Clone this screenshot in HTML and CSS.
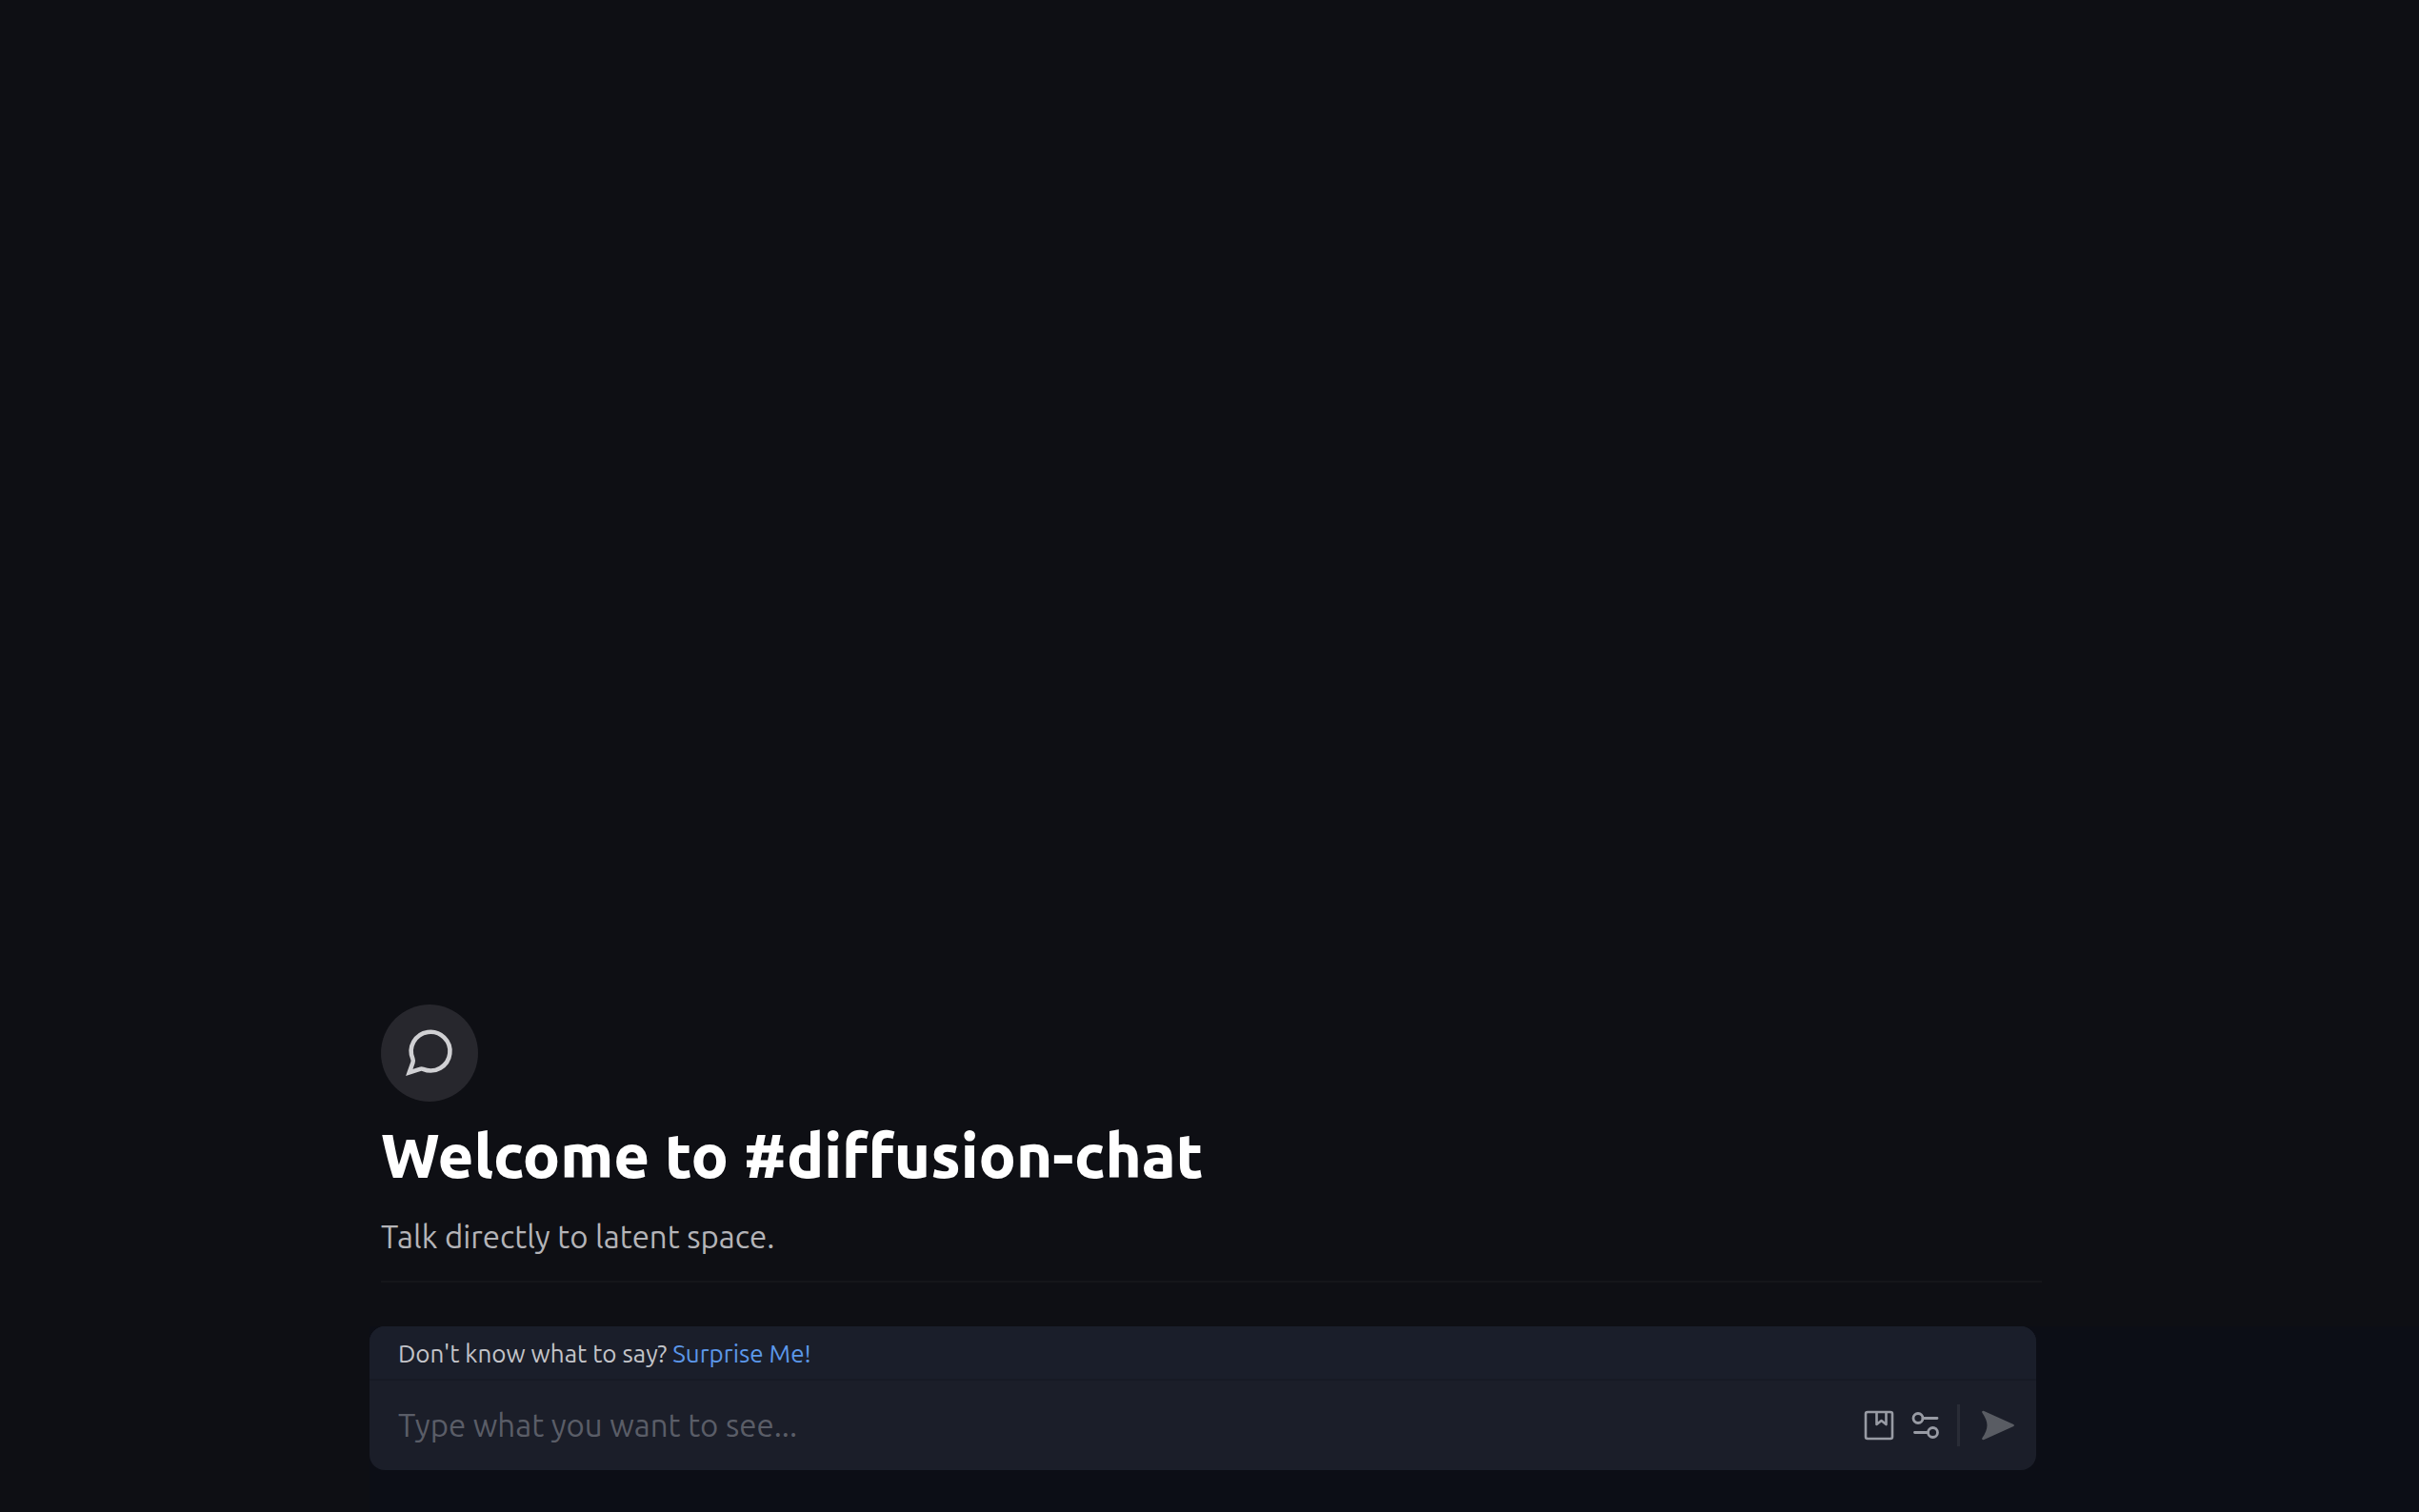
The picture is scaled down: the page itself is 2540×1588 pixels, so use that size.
FILE: index.html
```html
<!DOCTYPE html>
<html lang="en">
<head>
  <meta charset="utf-8">
  <title>diffusion-chat</title>
  <meta name="viewport" content="width=device-width, initial-scale=1">
  <link rel="stylesheet" href="styles.css">
</head>
<body>

<main class="messages">
  <div class="welcome">
    <div class="avatar">
      <svg viewBox="0 0 24 24" fill="none" stroke="currentColor" stroke-width="2.1" stroke-linecap="square" stroke-linejoin="miter">
        <path d="M2.2 21.4 L3.9 16.6 Q4.200 15.700 3.900 14.900 A9.400 9.400 0 1 1 8.900 19.800 Q8.100 19.500 7.300 19.800 Z"/>
      </svg>
    </div>
    <h1>Welcome to #diffusion-chat</h1>
    <p>Talk directly to latent space.</p>
  </div>
</main>

<footer class="composer">
  <form class="prompt" onsubmit="return false">
    <div class="hint">
      Don't know what to say? <a href="#" id="surprise">Surprise Me!</a>
    </div>
    <div class="bar">
      <input type="text" id="promptInput" aria-label="Prompt" placeholder="Type what you want to see..." autocomplete="off">
      <button type="button" class="icon" aria-label="Saved prompts">
        <svg viewBox="0 0 32 32" fill="none" stroke="currentColor" stroke-width="2.6" stroke-linejoin="round">
          <rect x="2" y="2" width="28" height="28" rx="2"/>
          <path d="M13.5 2v13l5-4 5 4V2"/>
        </svg>
      </button>
      <button type="button" class="icon" aria-label="Settings">
        <svg viewBox="0 0 32 32" fill="none" stroke="currentColor" stroke-width="2.8" stroke-linecap="round">
          <circle cx="8" cy="8.500" r="5"/>
          <path d="M13 8.500h15M4.500 23.500h14"/>
          <circle cx="23.500" cy="23.500" r="5"/>
        </svg>
      </button>
      <span class="separator"></span>
      <button type="submit" class="send" aria-label="Send">
        <svg viewBox="0 0 36 32" fill="currentColor">
          <path d="M3.300 1 34.300 15Q35.800 16 34.300 17L3.300 31Q.6 31.600 1.200 29.600 6.500 22 6.500 16T1.200 2.400Q.6.400 3.300 1Z"/>
        </svg>
      </button>
    </div>
  </form>
</footer>

<script>
  const prompts = [
    'a lighthouse in a storm, oil painting',
    'a fox reading a newspaper on the subway',
    'a city built inside a glass bottle'
  ];

  // fill the box with a random prompt
  document.getElementById('surprise').addEventListener('click', function(event) {
    event.preventDefault();
    document.getElementById('promptInput').value = prompts[Math.floor(Math.random() * prompts.length)];
  });
</script>

</body>
</html>
```
FILE: styles.css
```css
* {
  box-sizing: border-box;
}

body {
  margin: 0;
  min-height: 100vh;
  display: flex;
  flex-direction: column;
  font-family: Ubuntu, "Noto Sans", sans-serif;
  background-color: #0e0f14;
  color: #fff;
}

/* messages stick to the bottom */
.messages {
  flex: 1;
  display: flex;
  flex-direction: column;
  justify-content: flex-end;
  padding: 0 396px 46px 400px;
}

.welcome {
  border-bottom: 2px solid #15161a;
  padding-bottom: 24px;
}

.avatar {
  width: 102px;
  height: 102px;
  border-radius: 50%;
  background-color: #27272d;
  color: #d0d0d3;
  display: flex;
  align-items: center;
  justify-content: center;
}

.avatar svg {
  width: 52px;
  height: 52px;
}

h1 {
  margin: 14px 0 0;
  font-size: 65px;
  line-height: 84px;
  font-weight: 800;
}

.welcome p {
  margin: 22px 0 0;
  font-size: 33px;
  line-height: 44px;
  color: #b4b4b8;
}

.composer {
  margin-left: 388px;
  padding: 0 402px 44px 0;
  background-color: #0c0e16;
}

.prompt {
  border-radius: 16px;
  overflow: hidden;
  background-color: #1b1e29;
}

.hint {
  padding: 9px 30px 6px;
  font-size: 26px;
  line-height: 40px;
  color: #c3c4c9;
  background-color: #1a1e2a;
  border-bottom: 2px solid #171a25;
}

.hint a {
  color: #5c98ea;
  text-decoration: none;
}

.bar {
  display: flex;
  align-items: center;
  height: 94px;
  padding: 0 22px 0 30px;
}

.bar input {
  flex: 1;
  min-width: 0;
  padding: 0;
  border: none;
  outline: none;
  background: none;
  font-family: inherit;
  font-size: 33px;
  line-height: 44px;
  color: #fff;
}

.bar input::placeholder {
  color: #5a5d67;
  opacity: 1;
}

.bar button {
  padding: 0;
  border: none;
  background: none;
  cursor: pointer;
}

.bar svg {
  display: block;
}

.icon {
  margin-right: 17px;
  color: #989ba4;
}

.icon svg {
  width: 32px;
  height: 32px;
}

.separator {
  width: 3px;
  height: 44px;
  margin-right: 22px;
  background-color: #292c36;
}

.send {
  color: #595c63;
}

.send svg {
  width: 36px;
  height: 32px;
}
```
